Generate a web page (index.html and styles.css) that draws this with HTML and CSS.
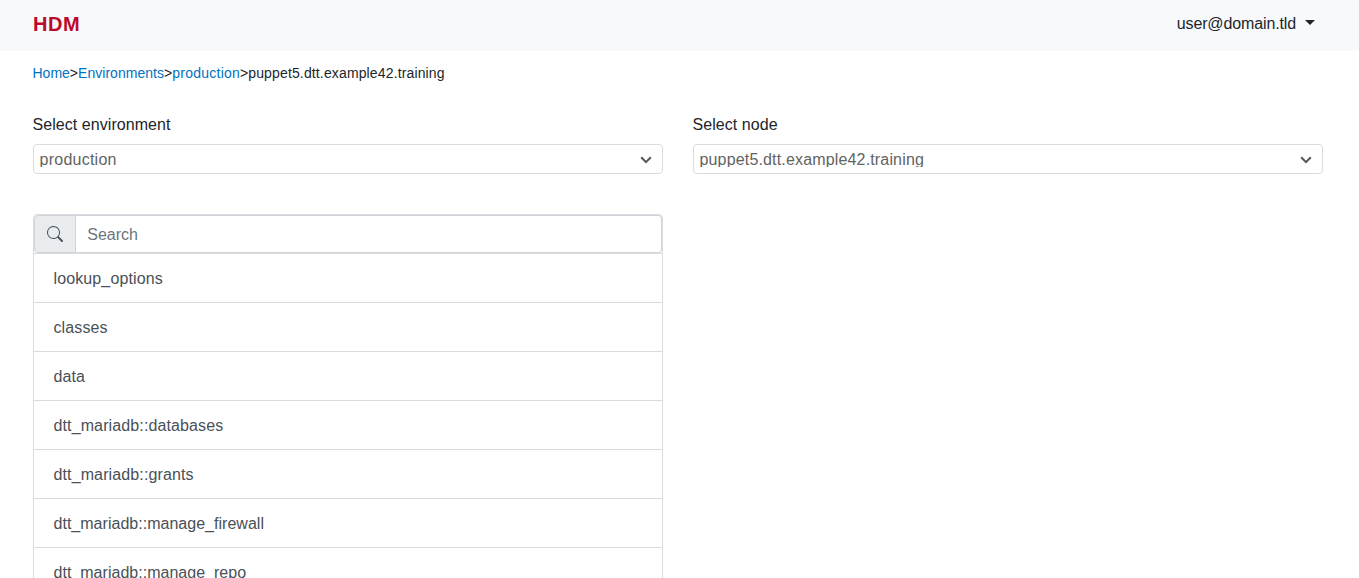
FILE: index.html
```html
<!DOCTYPE html>
<html lang="en">
<head>
<meta charset="utf-8">
<title>HDM</title>
<link rel="stylesheet" href="styles.css">
</head>
<body>
<header class="navbar">
  <a class="brand">HDM</a>
  <a class="user"><span class="user-name">user@domain.tld</span><span class="caret"></span></a>
</header>
<nav class="breadcrumbs"><a class="home">Home</a><span class="sep">&gt;</span><a class="envs">Environments</a><span class="sep">&gt;</span><a class="env">production</a><span class="sep">&gt;</span><span class="current">puppet5.dtt.example42.training</span></nav>
<main class="grid">
  <section>
    <div class="label">Select environment</div>
    <div class="select">
      <span class="value v-env">production</span>
      <svg class="chevron" viewBox="0 0 12 8"><path d="M1.2 1.3 6 6.1l4.800-4.800" fill="none" stroke="#555" stroke-width="2"/></svg>
    </div>
    <div class="list">
      <div class="search">
        <span class="search-icon"><svg width="16" height="16" viewBox="0 0 16 16" fill="#495057"><path d="M11.742 10.344a6.500 6.500 0 1 0-1.397 1.398h-.001c.03.04.062.078.098.115l3.850 3.850a1 1 0 0 0 1.415-1.414l-3.850-3.850a1.007 1.007 0 0 0-.115-.1zM12 6.500a5.500 5.500 0 1 1-11 0 5.500 5.500 0 0 1 11 0z"/></svg></span>
        <span class="search-input">Search</span>
      </div>
      <div class="item">lookup_options</div>
      <div class="item">classes</div>
      <div class="item">data</div>
      <div class="item">dtt_mariadb::databases</div>
      <div class="item">dtt_mariadb::grants</div>
      <div class="item long">dtt_mariadb::manage_firewall</div>
      <div class="item long">dtt_mariadb::manage_repo</div>
    </div>
  </section>
  <section>
    <div class="label">Select node</div>
    <div class="select">
      <span class="value v-node">puppet5.dtt.example42.training</span>
      <svg class="chevron" viewBox="0 0 12 8"><path d="M1.2 1.3 6 6.1l4.800-4.800" fill="none" stroke="#555" stroke-width="2"/></svg>
    </div>
  </section>
</main>
</body>
</html>
```
FILE: styles.css
```css
* { box-sizing: border-box; }
body {
  margin: 0;
  height: 578px;
  overflow: hidden;
  background: #fff;
  color: #212529;
  font: 16px/24px "Liberation Sans", Arial, sans-serif;
}
.navbar {
  height: 51px;
  padding: 0 44px 4px 33px;
  display: flex;
  align-items: center;
  justify-content: space-between;
  background: #f8f9fb;
}
.brand { color: #bd0a2b; font-size: 20px; font-weight: 700; letter-spacing: 0.500px; }
.user { display: flex; align-items: center; gap: 9px; color: #212529; }
.user-name { letter-spacing: -0.130px; }
.caret {
  border-top: 5px solid #212529;
  border-left: 5px solid transparent;
  border-right: 5px solid transparent;
  margin-top: -3px;
}
.breadcrumbs {
  display: flex;
  height: 21px;
  margin: 12px 0 0 32.500px;
  font-size: 14px;
  line-height: 21px;
}
.breadcrumbs a { color: #0072bf; }
.breadcrumbs .envs { letter-spacing: 0.030px; }
.breadcrumbs .env { letter-spacing: 0.250px; }
.breadcrumbs .current { letter-spacing: 0.140px; }
.grid {
  display: grid;
  grid-template-columns: 630px 630px;
  column-gap: 30px;
  margin: 28px 0 0 33px;
}
.label { height: 32px; margin-left: -0.500px; line-height: 25px; letter-spacing: 0.060px; }
.select {
  display: flex;
  align-items: center;
  justify-content: space-between;
  height: 30px;
  padding: 0 10px 0 5.500px;
  border: 1px solid #dadbe2;
  border-radius: 4px;
  color: #636363;
}
.value { height: 17px; margin-top: -1px; line-height: 19px; overflow: hidden; }
.v-env { letter-spacing: 0.250px; }
.v-node { letter-spacing: 0.160px; }
.chevron { width: 12px; height: 8px; margin-top: 2px; }
.list {
  margin-top: 40px;
  border: 1px solid #d9dbdd;
  border-radius: 4px 4px 0 0;
}
.search { display: flex; height: 38px; }
.search-icon {
  display: flex;
  width: 42px;
  align-items: center;
  justify-content: center;
  background: #e9ecef;
  border: 1px solid #ced4da;
  border-radius: 4px 0 0 4px;
}
.search-input {
  flex: 1;
  padding: 0 11.300px;
  line-height: 37px;
  border: 1px solid #ced4da;
  border-left: 0;
  border-radius: 0 4px 4px 0;
  color: #6c757d;
}
.item {
  height: 49px;
  padding: 13px 20px 12px 19.500px;
  border-top: 1px solid #d9dbdd;
  color: #495057;
  letter-spacing: 0.120px;
}
.item.long { letter-spacing: 0.020px; }
```
